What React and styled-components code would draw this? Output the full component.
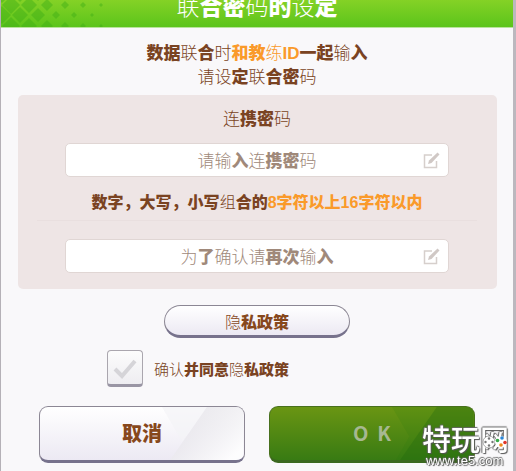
import React, { useState } from "react";
import styled, { createGlobalStyle, css } from "styled-components";

const GlobalStyle = createGlobalStyle`
  *, *::before, *::after { box-sizing: border-box; }
  body {
    margin: 0;
    background: #f9f8fa;
    color: #7a4322;
    font-family: "Noto Sans CJK SC", "Noto Sans", sans-serif;
    font-weight: 300;
  }
  b { font-weight: 900; }
`;

const Dialog = styled.main`
  min-height: 100vh;
  border-left: 1px solid #b5b1b7;
  border-right: 3px solid #bcb8be;
  background: #f9f8fa;
`;

const Header = styled.header`
  position: relative;
  height: 28px;
  display: flex;
  justify-content: center;
  align-items: flex-end;
  padding-bottom: 8px;
  border-bottom: 1px solid #b9e39c;
  background: linear-gradient(#84d226, #5cc41b);
  overflow: hidden;
`;

const Pattern = styled.svg`
  position: absolute;
  left: 0;
  top: 0;
`;

const Title = styled.h1`
  margin: 0;
  font-size: 23px;
  line-height: 28px;
  font-weight: 300;
  color: #fff;
`;

const Intro = styled.p`
  margin: 12px 0 0;
  text-align: center;
  font-size: 17px;
  line-height: 24px;
`;

const Accent = styled.span`
  color: #fa9a2a;
`;

const Latin = styled.b`
  font-family: "Liberation Sans", Arial, sans-serif;
  font-weight: 700;
  line-height: 1;
`;

const Panel = styled.section`
  margin: 7px 16px 0 17px;
  padding: 11px 48px 16px 47px;
  border-radius: 5px;
  background: #eee5e5;
`;

const PanelTitle = styled.h2`
  margin: 0 0 13px;
  text-align: center;
  font-size: 17px;
  line-height: 24px;
  font-weight: 300;
`;

const FieldBox = styled.label`
  display: grid;
  grid-template-columns: 1fr auto;
  align-items: center;
  height: 34px;
  padding-right: 8px;
  border: 1px solid #e0d6d4;
  border-radius: 5px;
  background: #fff;
`;

const FieldInput = styled.input`
  grid-area: 1 / 1 / 2 / 3;
  width: 100%;
  border: 0;
  outline: 0;
  background: transparent;
  text-align: center;
  font: inherit;
  font-size: 17px;
  color: #7a4322;
  &:not(:placeholder-shown) + span { visibility: hidden; }
`;

const FieldPrompt = styled.span`
  grid-area: 1 / 1 / 2 / 3;
  padding-left: 8px;
  text-align: center;
  font-size: 17px;
  line-height: 24px;
  color: #a0897a;
  pointer-events: none;
`;

const EditIcon = styled.svg`
  grid-area: 1 / 2 / 2 / 3;
`;

const Hint = styled.p`
  margin: 12px -24px 0;
  text-align: center;
  font-size: 16px;
  line-height: 24px;
  white-space: nowrap;
`;

const Divider = styled.hr`
  margin: 7px -28px 18px;
  border: 0;
  border-top: 1px solid #e9dfdf;
`;

const buttonFace = css`
  border: 1px solid #8c8794;
  border-bottom: 3px solid #77728c;
  background: linear-gradient(#fff, #ece9f3);
  color: #87481c;
  font-family: inherit;
  cursor: pointer;
`;

const PolicyButton = styled.button`
  ${buttonFace}
  display: block;
  width: 186px;
  height: 33px;
  margin: 16px auto 0;
  padding: 0;
  border-radius: 17px;
  font-size: 16px;
  font-weight: 300;
`;

const Consent = styled.label`
  display: flex;
  align-items: center;
  gap: 11px;
  width: max-content;
  margin: 12px 0 0 106px;
  font-size: 15px;
  line-height: 24px;
  cursor: pointer;
`;

const CheckWrap = styled.span`
  display: grid;
  width: 36px;
  height: 37px;
`;

const CheckInput = styled.input`
  appearance: none;
  grid-area: 1 / 1;
  width: 100%;
  height: 100%;
  margin: 0;
  border: 1px solid #aaa6ae;
  border-bottom: 3px solid #9995a4;
  border-radius: 4px;
  background: linear-gradient(#fcfcfc, #eeedf1);
  &:checked + svg { color: #6fc52a; }
`;

const CheckMark = styled.svg`
  grid-area: 1 / 1;
  place-self: center;
  color: #d5d4d8;
  pointer-events: none;
`;

const Actions = styled.footer`
  display: grid;
  grid-template-columns: 1fr 1fr;
  gap: 24px;
  margin: 19px 38px 0;
`;

const ActionButton = styled.button`
  ${buttonFace}
  position: relative;
  height: 57px;
  padding: 0 0 2px;
  border-radius: 9px;
  font-size: 20px;
  font-weight: 900;
  overflow: hidden;
  ${(p) =>
    p.$primary &&
    css`
      border-color: #48701d;
      border-bottom-color: #3b681f;
      background: linear-gradient(#6a9513, #387b13);
      color: #a6b891;
      font-weight: 700;
    `}
`;

const Facet = styled.svg`
  position: absolute;
  right: 0;
  top: 0;
  height: 100%;
`;

const Label = styled.span`
  position: relative;
  white-space: pre;
`;

const Watermark = styled.aside`
  position: fixed;
  right: 7px;
  bottom: 3px;
  color: #fff;
  text-shadow: 1px 1px 1px #555, -1px 0 1px #666, 0 -1px 1px #666;
`;

const Brand = styled.div`
  position: relative;
  font-size: 29px;
  line-height: 30px;
  font-weight: 500;
`;

const Gamepad = styled.svg`
  position: absolute;
  right: 0;
  bottom: 3px;
`;

const Site = styled.div`
  padding-left: 4px;
  font-family: "Liberation Sans", Arial, sans-serif;
  font-size: 13px;
  line-height: 15px;
  font-weight: 400;
`;

function Field({ children, label }) {
  return (
    <FieldBox>
      <FieldInput type="password" placeholder=" " aria-label={label} />
      <FieldPrompt>{children}</FieldPrompt>
      <EditIcon width="17" height="17" viewBox="0 0 17 17" fill="none" stroke="#d6cfcc" strokeWidth="1.5" aria-hidden="true">
        <path d="M9 3H1.500v12.500H13.500V9" />
        <path d="M5 12l1-3.500 8.500-8 2 2-8 8.500z" fill="#d0c8c5" stroke="none" />
      </EditIcon>
    </FieldBox>
  );
}

const latticeSizes = [9, 9, 8, 8, 7, 6, 4, 4, 3, 3, 2, 2];
const lattice = latticeSizes.flatMap((s, c) => {
  const first = c % 2 ? 5 : -6;
  return [first, first + 21].map((y) => ({ x: c * 9 + 1, y, s }));
});

export default function App() {
  const [agreed, setAgreed] = useState(false);
  return (
    <>
      <GlobalStyle />
      <Dialog>
        <Header>
          <Pattern width="110" height="27" viewBox="0 0 110 27" fill="#3fae16" fillOpacity="0.45" aria-hidden="true">
            {lattice.map((d, i) => (
              <path key={i} d={`M${d.x} ${d.y - d.s}l${d.s} ${d.s}l${-d.s} ${d.s}l${-d.s} ${-d.s}z`} />
            ))}
          </Pattern>
          <Title>联<b>合密</b>码<b>的</b>设<b>定</b></Title>
        </Header>
        <Intro>
          <b>数据</b>联<b>合</b>时<Accent><b>和教</b>练<Latin>ID</Latin></Accent><b>一起</b>输<b>入</b>
          <br />
          请设<b>定</b>联<b>合密</b>码
        </Intro>
        <Panel>
          <PanelTitle>连<b>携密</b>码</PanelTitle>
          <Field label="请输入连携密码">请输<b>入</b>连<b>携密</b>码</Field>
          <Hint>
            <b>数字，大写，小写</b>组<b>合的</b>
            <Accent><Latin>8</Latin><b>字符以上</b><Latin>16</Latin><b>字符以内</b></Accent>
          </Hint>
          <Divider />
          <Field label="为了确认请再次输入">为<b>了</b>确认请<b>再次</b>输<b>入</b></Field>
        </Panel>
        <PolicyButton type="button">隐<b>私政策</b></PolicyButton>
        <Consent>
          <CheckWrap>
            <CheckInput type="checkbox" checked={agreed} onChange={(e) => setAgreed(e.target.checked)} />
            <CheckMark width="24" height="22" viewBox="0 0 24 22" fill="none" stroke="currentColor" strokeWidth="4" aria-hidden="true">
              <path d="M2 11l7 7L22 3" />
            </CheckMark>
          </CheckWrap>
          <span>确认<b>并同意</b>隐<b>私政策</b></span>
        </Consent>
        <Actions>
          <ActionButton type="button">
            <Facet viewBox="0 0 80 52" aria-hidden="true">
              <defs>
                <linearGradient id="sheen" x1="0" y1="0.3" x2="0.8" y2="1">
                  <stop offset="0" stopColor="#dddbe2" stopOpacity="0.6" />
                  <stop offset="1" stopColor="#ffffff" stopOpacity="0.9" />
                </linearGradient>
              </defs>
              <path d="M0 0h44L20 34z" fill="#f4f3f7" fillOpacity="0.7" />
              <path d="M44 0L8 52h72V0z" fill="url(#sheen)" />
            </Facet>
            <Label>取消</Label>
          </ActionButton>
          <ActionButton type="button" $primary>
            <Facet viewBox="0 0 80 52" aria-hidden="true">
              <path d="M0 0l17 29L4 52h76V0z" fill="#20750c" fillOpacity="0.14" />
              <path d="M44 0L8 52h72V0z" fill="#1d660c" fillOpacity="0.3" />
            </Facet>
            <Label>{"O  K"}</Label>
          </ActionButton>
        </Actions>
      </Dialog>
      <Watermark>
        <Brand>
          特玩网
          <Gamepad width="28" height="16" viewBox="0 0 28 16" aria-hidden="true">
            <circle cx="8" cy="8" r="6" fill="#fff" stroke="#777" strokeWidth="0.6" />
            <g fill="#777">
              <circle cx="8" cy="4.500" r="1.200" />
              <circle cx="8" cy="11.500" r="1.200" />
              <circle cx="4.500" cy="8" r="1.200" />
              <circle cx="11.500" cy="8" r="1.200" />
            </g>
            <circle cx="20" cy="8" r="6" fill="#fff" />
            <circle cx="21" cy="4" r="1.800" fill="#2a86d8" />
            <circle cx="16.500" cy="6.500" r="1.800" fill="#36a845" />
            <circle cx="24" cy="8.500" r="1.800" fill="#e0362c" />
            <circle cx="20" cy="11" r="1.800" fill="#f08a1e" />
          </Gamepad>
        </Brand>
        <Site>www.te5.com</Site>
      </Watermark>
    </>
  );
}
